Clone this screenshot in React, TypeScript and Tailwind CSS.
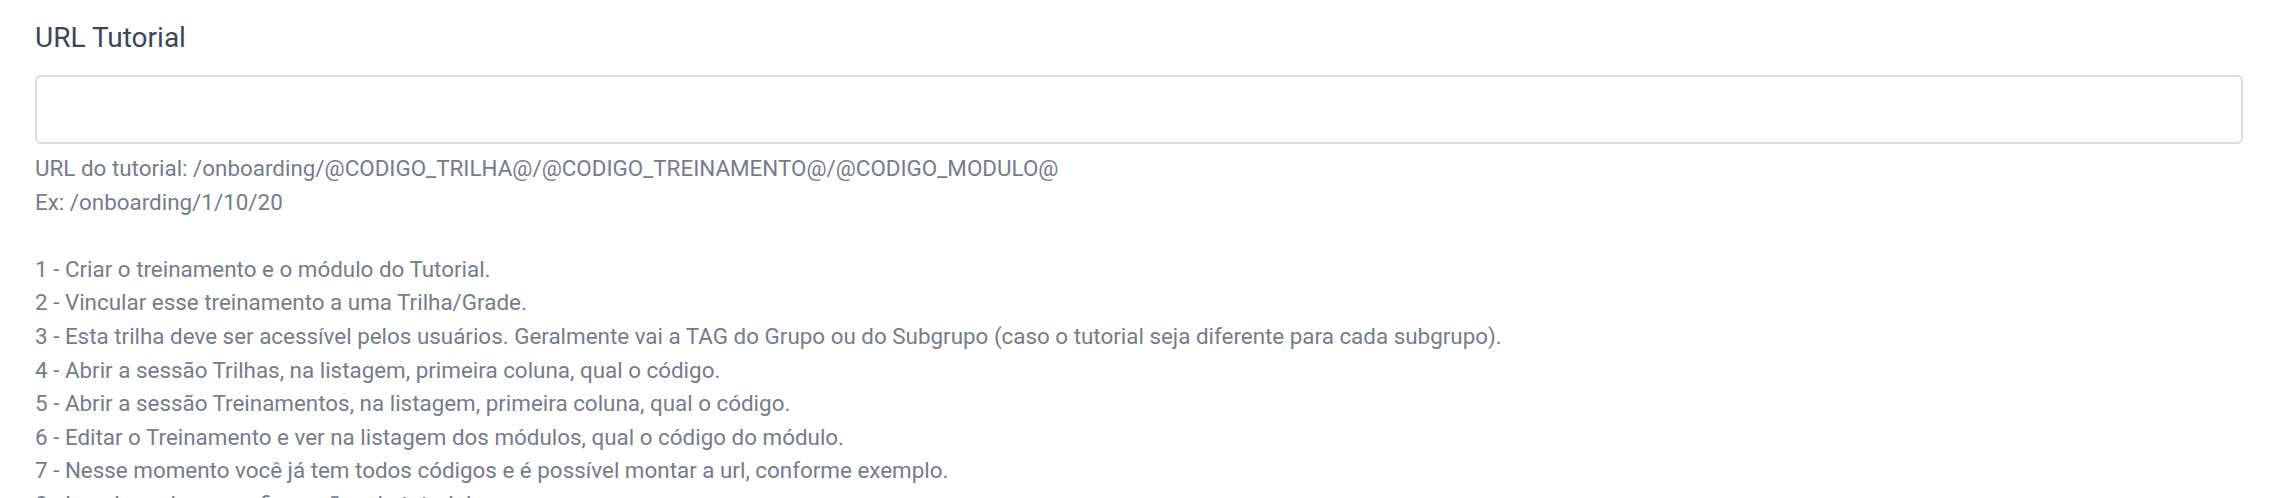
import React from "react";

const lines = [
  "1 - Criar o treinamento e o módulo do Tutorial.",
  "2 - Vincular esse treinamento a uma Trilha/Grade.",
  "3 - Esta trilha deve ser acessível pelos usuários. Geralmente vai a TAG do Grupo ou do Subgrupo (caso o tutorial seja diferente para cada subgrupo).",
  "4 - Abrir a sessão Trilhas, na listagem, primeira coluna, qual o código.",
  "5 - Abrir a sessão Treinamentos, na listagem, primeira coluna, qual o código.",
  "6 - Editar o Treinamento e ver na listagem dos módulos, qual o código do módulo.",
  "7 - Nesse momento você já tem todos códigos e é possível montar a url, conforme exemplo.",
  "8 - Inserir a url nas configurações do tutorial.",
];

export default function App() {
  return (
    <div className="h-[498px] w-[2282px] overflow-hidden bg-white pl-[35px] pr-[39px] pt-[18px] font-['Roboto',sans-serif]">
      <label className="block text-[28px] leading-[40px] text-[#3b4658]">URL Tutorial</label>
      <input
        type="text"
        className="mt-[17px] block h-[69px] w-full rounded-[6px] border-2 border-[#dcdce0] bg-white px-4 text-[21px] outline-none"
      />
      <div className="mt-[8px] text-[22.4px] leading-[33.6px] text-[#757c8c]">
        <div>URL do tutorial: /onboarding/@CODIGO_TRILHA@/@CODIGO_TREINAMENTO@/@CODIGO_MODULO@</div>
        <div>Ex: /onboarding/1/10/20</div>
        <div className="h-[33.6px]" />
        {lines.map((l) => (
          <div key={l}>{l}</div>
        ))}
      </div>
    </div>
  );
}
